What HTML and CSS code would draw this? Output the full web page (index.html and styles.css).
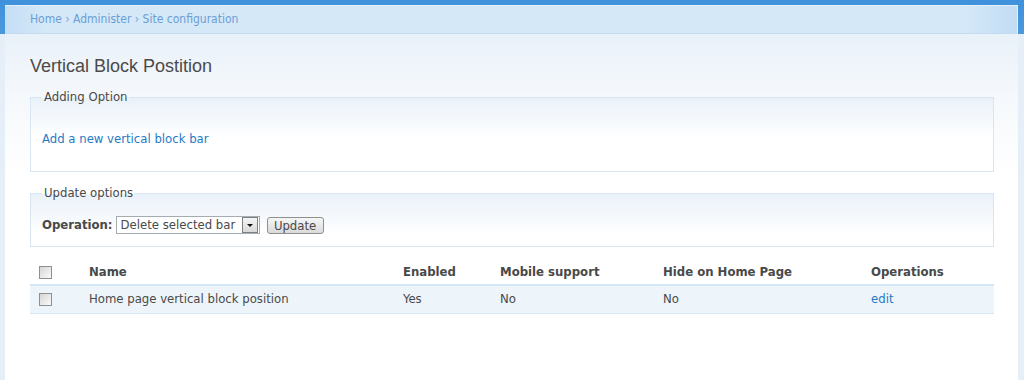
FILE: index.html
```html
<!DOCTYPE html>
<html lang="en">
<head>
  <meta charset="UTF-8">
  <title>Vertical Block Postition</title>
  <link rel="stylesheet" href="styles.css">
</head>
<body>
  <div class="frame">
    <div class="breadcrumb">
      <a href="#">Home</a> › <a href="#">Administer</a> › <a href="#">Site configuration</a>
    </div>

    <div class="content">
      <h2 class="title">Vertical Block Postition</h2>

      <fieldset class="box">
        <legend>Adding Option</legend>
        <a class="link" href="#">Add a new vertical block bar</a>
      </fieldset>

      <fieldset class="box box-update">
        <legend>Update options</legend>
        <div class="op-row">
          <label>Operation:</label>
          <div class="select">
            <span class="select-text">Delete selected bar</span>
            <span class="select-arrow"></span>
          </div>
          <button class="btn">Update</button>
        </div>
      </fieldset>

      <table class="grid">
        <thead>
          <tr>
            <th class="col-check"><input type="checkbox"></th>
            <th class="col-name">Name</th>
            <th class="col-enabled">Enabled</th>
            <th class="col-mobile">Mobile support</th>
            <th class="col-hide">Hide on Home Page</th>
            <th class="col-ops">Operations</th>
          </tr>
        </thead>
        <tbody>
          <tr class="odd">
            <td class="col-check"><input type="checkbox"></td>
            <td>Home page vertical block position</td>
            <td>Yes</td>
            <td>No</td>
            <td>No</td>
            <td><a class="link" href="#">edit</a></td>
          </tr>
        </tbody>
      </table>
    </div>
  </div>
</body>
</html>
```

FILE: styles.css
```css
body {
  margin: 0;
  font-family: "DejaVu Sans Condensed", "DejaVu Sans", sans-serif;
  font-stretch: condensed;
  font-size: 13px;
  line-height: 16px;
  color: #494949;
}
.frame {
  box-sizing: border-box;
  height: 380px;
  overflow: hidden;
  padding: 5px 6px 0 5px;
  background: linear-gradient(to bottom, #3f91db 0, #4a98dd 34px, #e6eef7 34px);
}
.breadcrumb {
  height: 27px;
  line-height: 27px;
  padding-left: 25px;
  font-size: 12px;
  color: #79a6d8;
  background: linear-gradient(to right, #c4def5 0, #d4e8f8 40px, #d4e8f8 960px, #c2dcf4 100%);
  border-top: 1px solid #e4f1fb;
  border-right: 1px solid #e4f1fb;
  border-bottom: 1px solid #c3dbf1;
}
.breadcrumb a {
  color: #6b9ed6;
  text-decoration: none;
}
.content {
  min-height: 346px;
  padding: 20px 24px 0 25px;
  background: linear-gradient(to bottom, #e9f1f9 0, #f6f9fc 70px, #ffffff 140px);
}
.title {
  margin: 0;
  font-family: "Liberation Sans", Arial, sans-serif;
  font-size: 18px;
  font-weight: normal;
  line-height: 24px;
  color: #4a4a4a;
}
.box {
  margin: 11px 0 0;
  padding: 26px 11px 24px;
  border: 1px solid #d9e6f2;
  background: linear-gradient(to bottom, #e9f1f9 0, #ffffff 40px);
}
.box legend {
  padding: 0 2px;
  margin-left: 0;
  line-height: 16px;
}
.box-update {
  margin-top: 13px;
  padding: 14px 11px 11px;
}
.link {
  color: #1f7ac7;
  text-decoration: none;
}
.op-row {
  display: flex;
  align-items: center;
  height: 20px;
}
.op-row label {
  font-weight: bold;
  margin-right: 3px;
}
.select {
  box-sizing: border-box;
  display: flex;
  align-items: center;
  justify-content: space-between;
  width: 144px;
  height: 18px;
  padding: 0 1px 0 4px;
  border: 1px solid #a5acb2;
  background: #fff;
}
.select-text {
  line-height: 16px;
}
.select-arrow {
  box-sizing: border-box;
  position: relative;
  width: 16px;
  height: 16px;
  border: 1px solid #7f7f7f;
  background: linear-gradient(to bottom, #f4f4f4, #d8d8d8);
}
.select-arrow::after {
  content: "";
  position: absolute;
  left: 4px;
  top: 6px;
  border-left: 3px solid transparent;
  border-right: 3px solid transparent;
  border-top: 3px solid #111;
}
.btn {
  box-sizing: border-box;
  margin-left: 7px;
  width: 57px;
  height: 17px;
  padding: 0;
  font: inherit;
  line-height: 15px;
  color: #494949;
  border: 1px solid #8e8f8f;
  border-radius: 3px;
  background: linear-gradient(to bottom, #f6f6f6, #dadada);
}
.grid {
  width: 100%;
  margin-top: 12px;
  border-collapse: collapse;
  table-layout: fixed;
}
.grid th,
.grid td {
  padding: 5px 0 6px;
  text-align: left;
  vertical-align: middle;
}
.grid th {
  font-weight: bold;
  border-bottom: 2px solid #d3e7f4;
  padding-bottom: 4px;
}
.grid tr.odd td {
  background: #edf5fa;
  border-bottom: 1px solid #d3e7f4;
}
.grid .col-check { width: 59px; padding-left: 9px; box-sizing: border-box; }
.grid .col-name { width: 314px; }
.grid .col-enabled { width: 97px; }
.grid .col-mobile { width: 163px; }
.grid .col-hide { width: 208px; }
.grid input[type="checkbox"] {
  -webkit-appearance: none;
  appearance: none;
  display: block;
  margin: 0;
  width: 13px;
  height: 13px;
  border: 1px solid #8f8f8f;
  background: linear-gradient(135deg, #d6d6d6, #fafafa);
  box-sizing: border-box;
}
```
